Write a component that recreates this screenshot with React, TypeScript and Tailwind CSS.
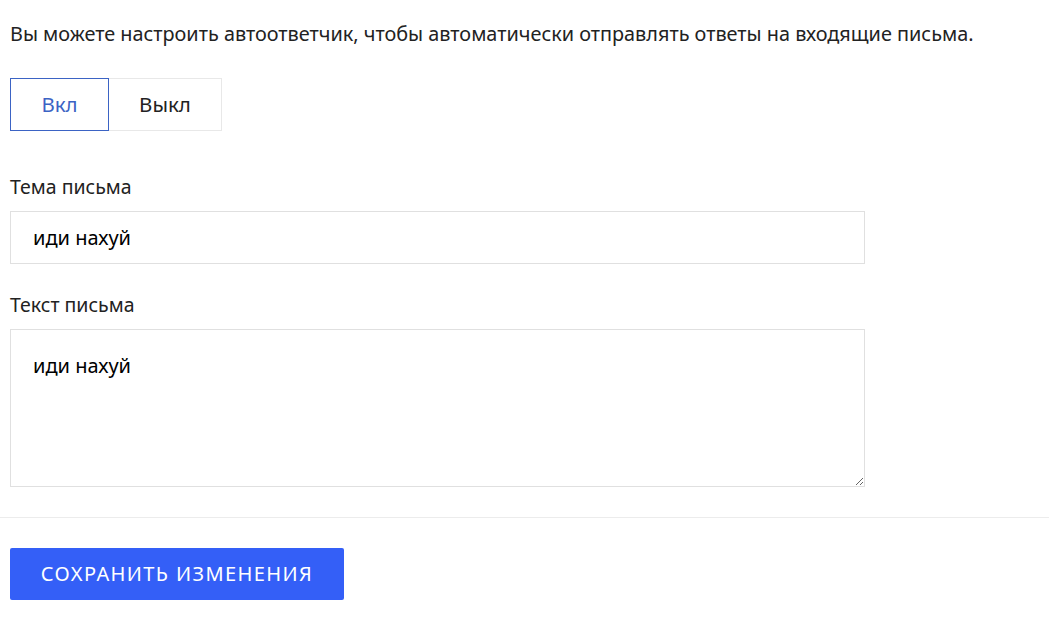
import { useState } from "react";

export default function App() {
  const [enabled, setEnabled] = useState(true);
  const [subject, setSubject] = useState("иди нахуй");
  const [body, setBody] = useState("иди нахуй");

  return (
    <div className="min-h-screen bg-white text-[#222] font-['Noto_Sans',sans-serif] text-[20px]">
      <div className="px-[10px] pt-[21px]">
        <p className="leading-[26px] text-[19.85px]">
          Вы можете настроить автоответчик, чтобы автоматически отправлять ответы на входящие письма.
        </p>

        {/* On / Off switch */}
        <div className="mt-[31px] flex">
          <button
            onClick={() => setEnabled(true)}
            className={`w-[99px] h-[53px] border text-[20.5px] ${enabled ? "border-[#3b63c4] text-[#3b63c4]" : "border-[#e8e8e8] text-[#222]"}`}
          >
            Вкл
          </button>
          <button
            onClick={() => setEnabled(false)}
            className={`w-[113px] h-[53px] border text-[20.5px] ${!enabled ? "border-[#3b63c4] text-[#3b63c4]" : "border-[#e8e8e8] border-l-0 text-[#222]"}`}
          >
            Выкл
          </button>
        </div>

        {/* Subject */}
        <label className="block mt-[44px] leading-[24px] text-[19.5px]">Тема письма</label>
        <input
          value={subject}
          onChange={(e) => setSubject(e.target.value)}
          className="mt-[12px] block w-[855px] h-[53px] border border-[#e0e0e0] px-[22px] text-black outline-none"
        />

        {/* Body */}
        <label className="block mt-[29px] leading-[24px] text-[19.5px]">Текст письма</label>
        <textarea
          value={body}
          onChange={(e) => setBody(e.target.value)}
          className="mt-[12px] block w-[855px] h-[158px] border border-[#e0e0e0] px-[22px] pt-[22px] leading-[28px] text-black outline-none resize"
        />
      </div>

      <div className="mt-[30px] border-t border-[#ececec]" />

      <div className="px-[10px] pt-[30px]">
        <button className="w-[334px] h-[52px] rounded-[2px] bg-[#345ff7] text-white uppercase tracking-[0.07em] text-[20px]">
          Сохранить изменения
        </button>
      </div>
    </div>
  );
}
